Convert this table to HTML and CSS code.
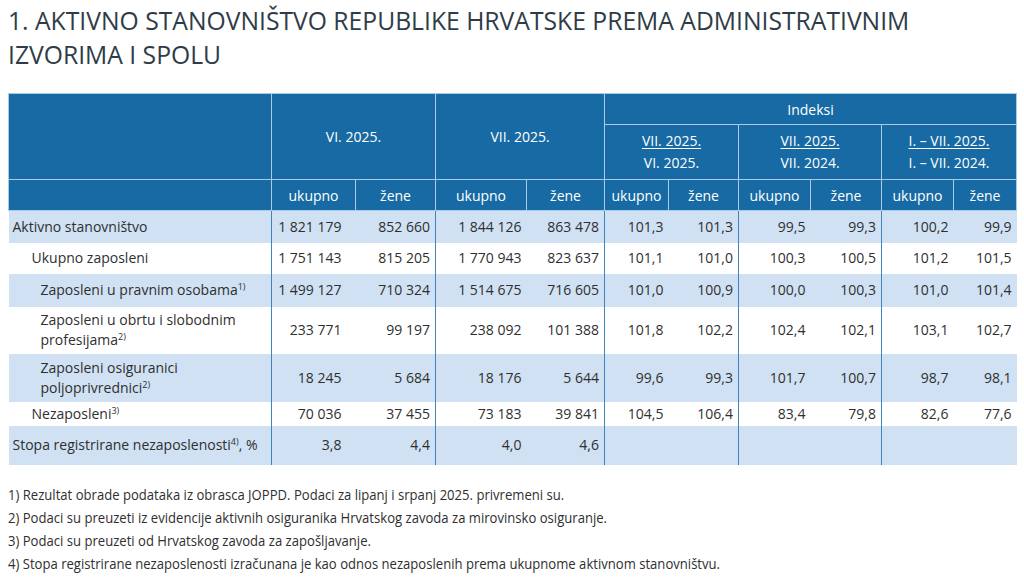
FILE: index.html
```html
<!DOCTYPE html>
<html lang="hr">
<head>
<meta charset="utf-8">
<title>Aktivno stanovništvo</title>
<link rel="stylesheet" href="styles.css">
</head>
<body>
<div class="page">
  <h1 class="title">1. AKTIVNO STANOVNIŠTVO REPUBLIKE HRVATSKE PREMA ADMINISTRATIVNIM<br>IZVORIMA I SPOLU</h1>
  <table class="data">
    <colgroup>
      <col class="c-label"><col class="c-84"><col class="c-80"><col class="c-91"><col class="c-78">
      <col class="c-64"><col class="c-70"><col class="c-72"><col class="c-71"><col class="c-72"><col class="c-63">
    </colgroup>
    <thead>
      <tr class="h1row">
        <th rowspan="2"></th>
        <th colspan="2" rowspan="2" class="period">VI. 2025.</th>
        <th colspan="2" rowspan="2" class="period">VII. 2025.</th>
        <th colspan="6">Indeksi</th>
      </tr>
      <tr class="h2row">
        <th colspan="2" class="frac"><span class="num">VII. 2025.</span><br>VI. 2025.</th>
        <th colspan="2" class="frac"><span class="num">VII. 2025.</span><br>VII. 2024.</th>
        <th colspan="2" class="frac"><span class="num">I. – VII. 2025.</span><br>I. – VII. 2024.</th>
      </tr>
      <tr class="h3row">
        <th></th>
        <th>ukupno</th><th>žene</th>
        <th>ukupno</th><th>žene</th>
        <th>ukupno</th><th>žene</th>
        <th>ukupno</th><th>žene</th>
        <th>ukupno</th><th>žene</th>
      </tr>
    </thead>
    <tbody>
      <tr class="alt r32">
        <td class="lbl">Aktivno stanovništvo</td>
        <td>1 821 179</td><td>852 660</td>
        <td>1 844 126</td><td>863 478</td>
        <td>101,3</td><td>101,3</td>
        <td>99,5</td><td>99,3</td>
        <td>100,2</td><td>99,9</td>
      </tr>
      <tr class="r31">
        <td class="lbl ind1">Ukupno zaposleni</td>
        <td>1 751 143</td><td>815 205</td>
        <td>1 770 943</td><td>823 637</td>
        <td>101,1</td><td>101,0</td>
        <td>100,3</td><td>100,5</td>
        <td>101,2</td><td>101,5</td>
      </tr>
      <tr class="alt r33">
        <td class="lbl ind2">Zaposleni u pravnim osobama<sup>1)</sup></td>
        <td>1 499 127</td><td>710 324</td>
        <td>1 514 675</td><td>716 605</td>
        <td>101,0</td><td>100,9</td>
        <td>100,0</td><td>100,3</td>
        <td>101,0</td><td>101,4</td>
      </tr>
      <tr class="r47">
        <td class="lbl ind2">Zaposleni u obrtu i slobodnim<br>profesijama<sup>2)</sup></td>
        <td>233 771</td><td>99 197</td>
        <td>238 092</td><td>101 388</td>
        <td>101,8</td><td>102,2</td>
        <td>102,4</td><td>102,1</td>
        <td>103,1</td><td>102,7</td>
      </tr>
      <tr class="alt r48">
        <td class="lbl ind2">Zaposleni osiguranici<br>poljoprivrednici<sup>2)</sup></td>
        <td>18 245</td><td>5 684</td>
        <td>18 176</td><td>5 644</td>
        <td>99,6</td><td>99,3</td>
        <td>101,7</td><td>100,7</td>
        <td>98,7</td><td>98,1</td>
      </tr>
      <tr class="r24">
        <td class="lbl ind1">Nezaposleni<sup>3)</sup></td>
        <td>70 036</td><td>37 455</td>
        <td>73 183</td><td>39 841</td>
        <td>104,5</td><td>106,4</td>
        <td>83,4</td><td>79,8</td>
        <td>82,6</td><td>77,6</td>
      </tr>
      <tr class="alt r39">
        <td class="lbl">Stopa registrirane nezaposlenosti<sup>4)</sup>, %</td>
        <td>3,8</td><td>4,4</td>
        <td>4,0</td><td>4,6</td>
        <td></td><td></td>
        <td></td><td></td>
        <td></td><td></td>
      </tr>
    </tbody>
  </table>
  <ol class="notes">
    <li>1) Rezultat obrade podataka iz obrasca JOPPD. Podaci za lipanj i srpanj 2025. privremeni su.</li>
    <li>2) Podaci su preuzeti iz evidencije aktivnih osiguranika Hrvatskog zavoda za mirovinsko osiguranje.</li>
    <li>3) Podaci su preuzeti od Hrvatskog zavoda za zapošljavanje.</li>
    <li>4) Stopa registrirane nezaposlenosti izračunana je kao odnos nezaposlenih prema ukupnome aktivnom stanovništvu.</li>
  </ol>
</div>
</body>
</html>
```

FILE: styles.css
```css
html, body {
  margin: 0;
  padding: 0;
  background: #ffffff;
}

.page {
  padding: 4px 8px 0 8px;
  font-family: "Open Sans", "Noto Sans", sans-serif;
  color: #2f2f2f;
}

.title {
  margin: 0;
  font-size: 24.7px;
  line-height: 34px;
  font-weight: 400;
  color: #2f3c48;
  white-space: nowrap;
}

.data {
  margin-top: 21px;
  width: 1008px;
  table-layout: fixed;
  border-collapse: collapse;
  font-size: 14px;
}

.c-label { width: 263px; }
.c-84 { width: 84px; }
.c-80 { width: 80px; }
.c-91 { width: 91px; }
.c-78 { width: 78px; }
.c-64 { width: 64px; }
.c-70 { width: 70px; }
.c-72 { width: 72px; }
.c-71 { width: 71px; }
.c-63 { width: 63px; }

.data th {
  background: #176aa3;
  color: #ffffff;
  font-weight: 400;
  border: 1px solid #a9cbe6;
  padding: 0;
  text-align: center;
  vertical-align: middle;
}

.h1row { height: 31px; }
.h2row { height: 55px; }
.h3row { height: 31px; }

.period { padding-top: 8px; }

.frac {
  line-height: 22px;
}

.frac .num {
  text-decoration: underline;
  text-underline-offset: 2px;
}

.data td {
  padding: 0 5px;
  text-align: right;
  vertical-align: middle;
  white-space: nowrap;
  line-height: 20px;
}

.data td:nth-child(1),
.data td:nth-child(3),
.data td:nth-child(5),
.data td:nth-child(7),
.data td:nth-child(9) {
  border-right: 1px solid #3f84bd;
}

.data td:nth-child(2) { padding-right: 14px; }

.data td.lbl {
  text-align: left;
  padding-left: 4px;
}

.data td.ind1 { padding-left: 23px; }
.data td.ind2 { padding-left: 32px; }

.data sup {
  font-size: 9px;
  line-height: 0;
  vertical-align: 5px;
}

.alt td { background: #cfe1f3; }

.r32 { height: 32px; }
.r31 { height: 31px; }
.r33 { height: 33px; }
.r47 { height: 47px; }
.r48 { height: 48px; }
.r24 { height: 24px; }
.r39 { height: 39px; }

.notes {
  list-style: none;
  margin: 18px 0 0 0;
  padding: 0;
  font-size: 14px;
  line-height: 23px;
  color: #2f2f2f;
  transform: scaleX(0.935);
  transform-origin: left top;
}

.notes li {
  white-space: nowrap;
}
```
